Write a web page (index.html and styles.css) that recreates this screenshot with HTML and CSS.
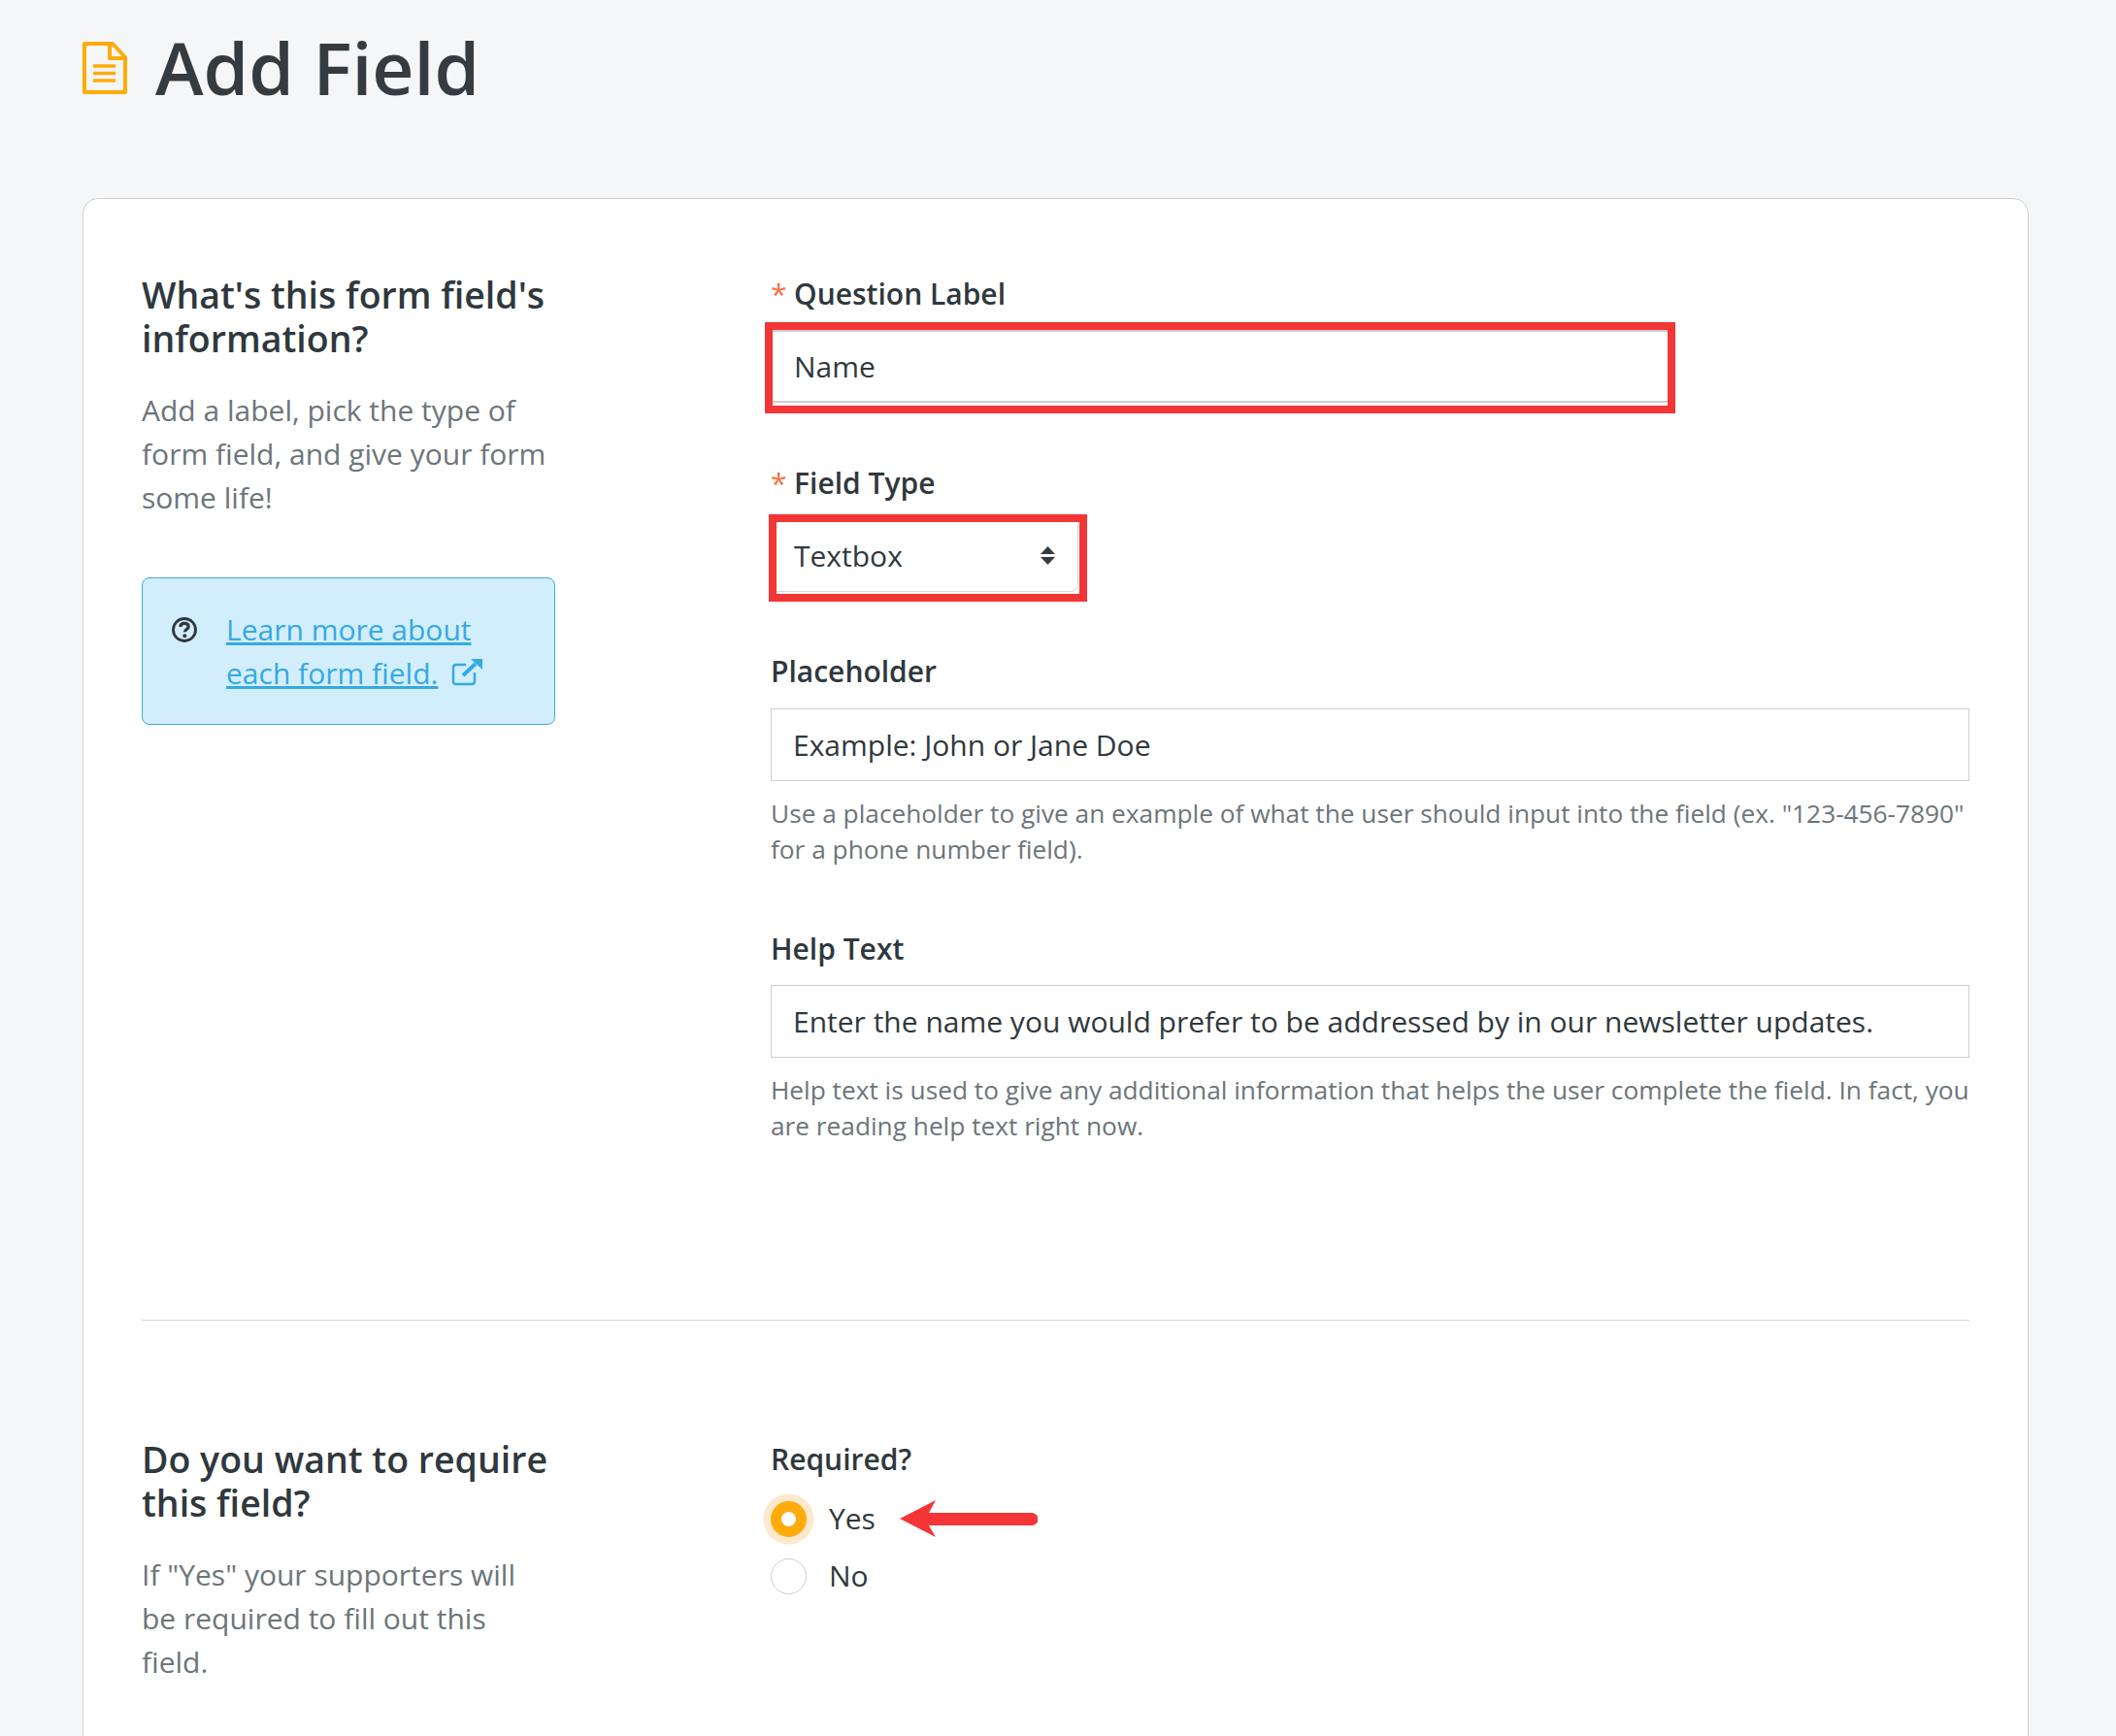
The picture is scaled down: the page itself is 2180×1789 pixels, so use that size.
FILE: index.html
```html
<!DOCTYPE html>
<html lang="en">
<head>
<meta charset="utf-8">
<title>Add Field</title>
<link rel="stylesheet" href="styles.css">
</head>
<body>
<header class="page-head">
  <svg class="doc-icon" viewBox="0 0 46 54" width="46" height="54" fill="none" stroke="#ffab0a" stroke-width="4" stroke-linejoin="round">
    <path d="M2 2H31L44 16V52H2Z"/>
    <path d="M28 2V17H44"/>
    <path d="M11 25H34M11 32.500H34M11 40H34" stroke-width="3.600"/>
  </svg>
  <h1 class="page-title">Add Field</h1>
</header>
<main class="card">
  <section class="row row-first">
    <div class="side">
      <h2 class="side-title">What's this form field's information?</h2>
      <p class="side-text">Add a label, pick the type of form field, and give your form some life!</p>
      <div class="info">
        <svg class="info-icon" viewBox="0 0 26 26" width="26" height="26" fill="none" stroke="#2f383d">
          <circle cx="13" cy="13" r="11.500" stroke-width="2.800"/>
          <path d="M8.800 10C9 7.600 10.800 6.400 13 6.400C15.400 6.400 17.200 7.700 17.200 9.800C17.200 12.400 13.400 12.500 13.400 15.200" stroke-width="3.200"/>
          <circle cx="13.300" cy="19.300" r="2" fill="#2f383d" stroke="none"/>
        </svg>
        <p class="info-text"><a class="info-link" href="#">Learn more about each form field.</a><svg class="ext-icon" viewBox="0 0 32 28" width="32" height="28" fill="none" stroke="#35a9e2"><path d="M24 14V23C24 25 23 26 21 26H5C3 26 2 25 2 23V9C2 7 3 6 5 6H15" stroke-width="2.400"/><path d="M12 17L25 5" stroke-width="4"/><path d="M20 0H32V11Z" fill="#35a9e2" stroke="none"/></svg></p>
      </div>
    </div>
    <div class="fields">
      <div class="field field-label">
        <label class="label"><span class="req">*</span>Question Label</label>
        <div class="flag flag-input"><input class="text-input bare" value="Name" readonly></div>
      </div>
      <div class="field field-type">
        <label class="label"><span class="req">*</span>Field Type</label>
        <div class="flag flag-select">
          <div class="select">Textbox
            <svg class="updown" viewBox="0 0 15 19" width="15" height="19" fill="#343c41"><path d="M7.500 0L15 8H0Z"/><path d="M7.500 19L0 11H15Z"/></svg>
          </div>
        </div>
      </div>
      <div class="field field-placeholder">
        <label class="label">Placeholder</label>
        <input class="text-input" value="Example: John or Jane Doe" readonly>
        <p class="hint">Use a placeholder to give an example of what the user should input into the field (ex. "123-456-7890" for a phone number field).</p>
      </div>
      <div class="field field-help">
        <label class="label">Help Text</label>
        <input class="text-input" value="Enter the name you would prefer to be addressed by in our newsletter updates." readonly>
        <p class="hint">Help text is used to give any additional information that helps the user complete the field. In fact, you are reading help text right now.</p>
      </div>
    </div>
  </section>
  <hr class="divider">
  <section class="row">
    <div class="side">
      <h2 class="side-title">Do you want to require this field?</h2>
      <p class="side-text">If "Yes" your supporters will be required to fill out this field.</p>
    </div>
    <div class="fields">
      <div class="label label-plain">Required?</div>
      <div class="radio-row radio-yes">
        <span class="radio radio-on"></span><span class="radio-text">Yes</span>
        <svg class="arrow" viewBox="0 0 142 38" width="142" height="38"><path d="M0 19L37 0L30 13H136A6 6 0 0 1 136 26H30L37 38Z" fill="#f33535"/></svg>
      </div>
      <div class="radio-row radio-no">
        <span class="radio"></span><span class="radio-text">No</span>
      </div>
    </div>
  </section>
</main>
</body>
</html>
```
FILE: styles.css
```css
* { box-sizing: border-box; }
html, body { height: 1789px; overflow: hidden; }
body {
  margin: 0;
  padding: 0 90px 0 85px;
  background: #f4f6f8;
  font-family: "Open Sans", "Noto Sans", sans-serif;
  color: #2f383d;
}
.page-head { display: flex; align-items: center; height: 204px; padding: 34px 0 100px; gap: 29px; }
.doc-icon { flex: none; margin-top: 2px; }
.page-title { margin: 0; font-size: 75px; font-weight: 600; line-height: 70px; color: #343c41; }
.card {
  background: #fff;
  border: 1px solid #cbcfd2;
  border-radius: 16px 16px 0 0;
  padding: 76px 60px 0;
  height: 1700px;
}
.row { display: grid; grid-template-columns: 426px 1235px; column-gap: 222px; }
.side-title { margin: 0; font-size: 37.500px; font-weight: 600; line-height: 45px; color: #2f383d; }
.side-text { margin: 29px 0 0; font-size: 30px; line-height: 45px; color: #6c757a; }
.info {
  display: flex;
  gap: 30px;
  align-items: flex-start;
  margin-top: 60px;
  height: 152px;
  padding: 30px 24px 0 30px;
  background: #d2eefd;
  border: 1.500px solid #42aadf;
  border-radius: 8px;
}
.info-icon { flex: none; margin-top: 10px; }
.info-text { margin: 0; font-size: 30px; line-height: 45px; color: #35a9e2; }
.info-link { color: #35a9e2; text-decoration: underline; }
.ext-icon { margin-left: 14px; vertical-align: -2px; }
.label { display: block; font-size: 30px; font-weight: 600; line-height: 45px; color: #2f383d; }
.req { color: #f4703f; margin-right: 7.500px; font-weight: 500; }
.field-label { margin-top: -1px; }
.field-type { margin-top: 57px; }
.field-placeholder { margin-top: 57px; }
.field-placeholder .text-input { margin-top: 16px; }
.field-help { margin-top: 61px; }
.flag { outline: 8px solid #f33535; background: #fff; }
.flag-input { width: 922px; height: 78px; margin: 15px 0 0 2px; }
.flag-select { width: 312px; height: 74px; margin: 18px 0 0 6px; }
.text-input {
  display: block;
  width: 100%;
  height: 75px;
  margin-top: 15px;
  padding: 0 22px;
  border: 1px solid #cbcfd2;
  background: #fff;
  font: 400 30px "Open Sans", "Noto Sans", sans-serif;
  color: #2f383d;
  outline: none;
}
.text-input.bare { margin: 0; border-width: 2px 0; padding: 0 22px; }
.select {
  display: flex;
  align-items: center;
  justify-content: space-between;
  height: 72px;
  padding: 0 23px 2px 18px;
  margin-right: 1px;
  border-right: 1.500px solid #d4d7d9;
  border-bottom: 1.500px solid #d4d7d9;
  border-radius: 0 0 8px 0;
  font-size: 30px;
  color: #2f383d;
}
.hint { margin: 15px 0 0; font-size: 26.250px; line-height: 37px; color: #6c757a; }
.divider { border: 0; border-top: 1px solid #d4d7d9; margin: 181px 0 120px; }
.label-plain { margin-top: 0; }
.radio-row { display: flex; align-items: center; height: 60px; }
.radio-yes { margin-top: 9px; }
.radio {
  flex: none;
  width: 37px;
  height: 37px;
  border: 1px solid #cbcfd2;
  border-radius: 50%;
  background: #fff;
}
.radio-on {
  border: 11px solid #ffab0a;
  box-shadow: 0 0 0 7.500px #fde9cc;
}
.radio-text { margin-left: 23px; font-size: 30px; line-height: 40px; color: #2f383d; }
.radio-no { margin-top: -1px; }
.arrow { margin-left: 25px; }
```
